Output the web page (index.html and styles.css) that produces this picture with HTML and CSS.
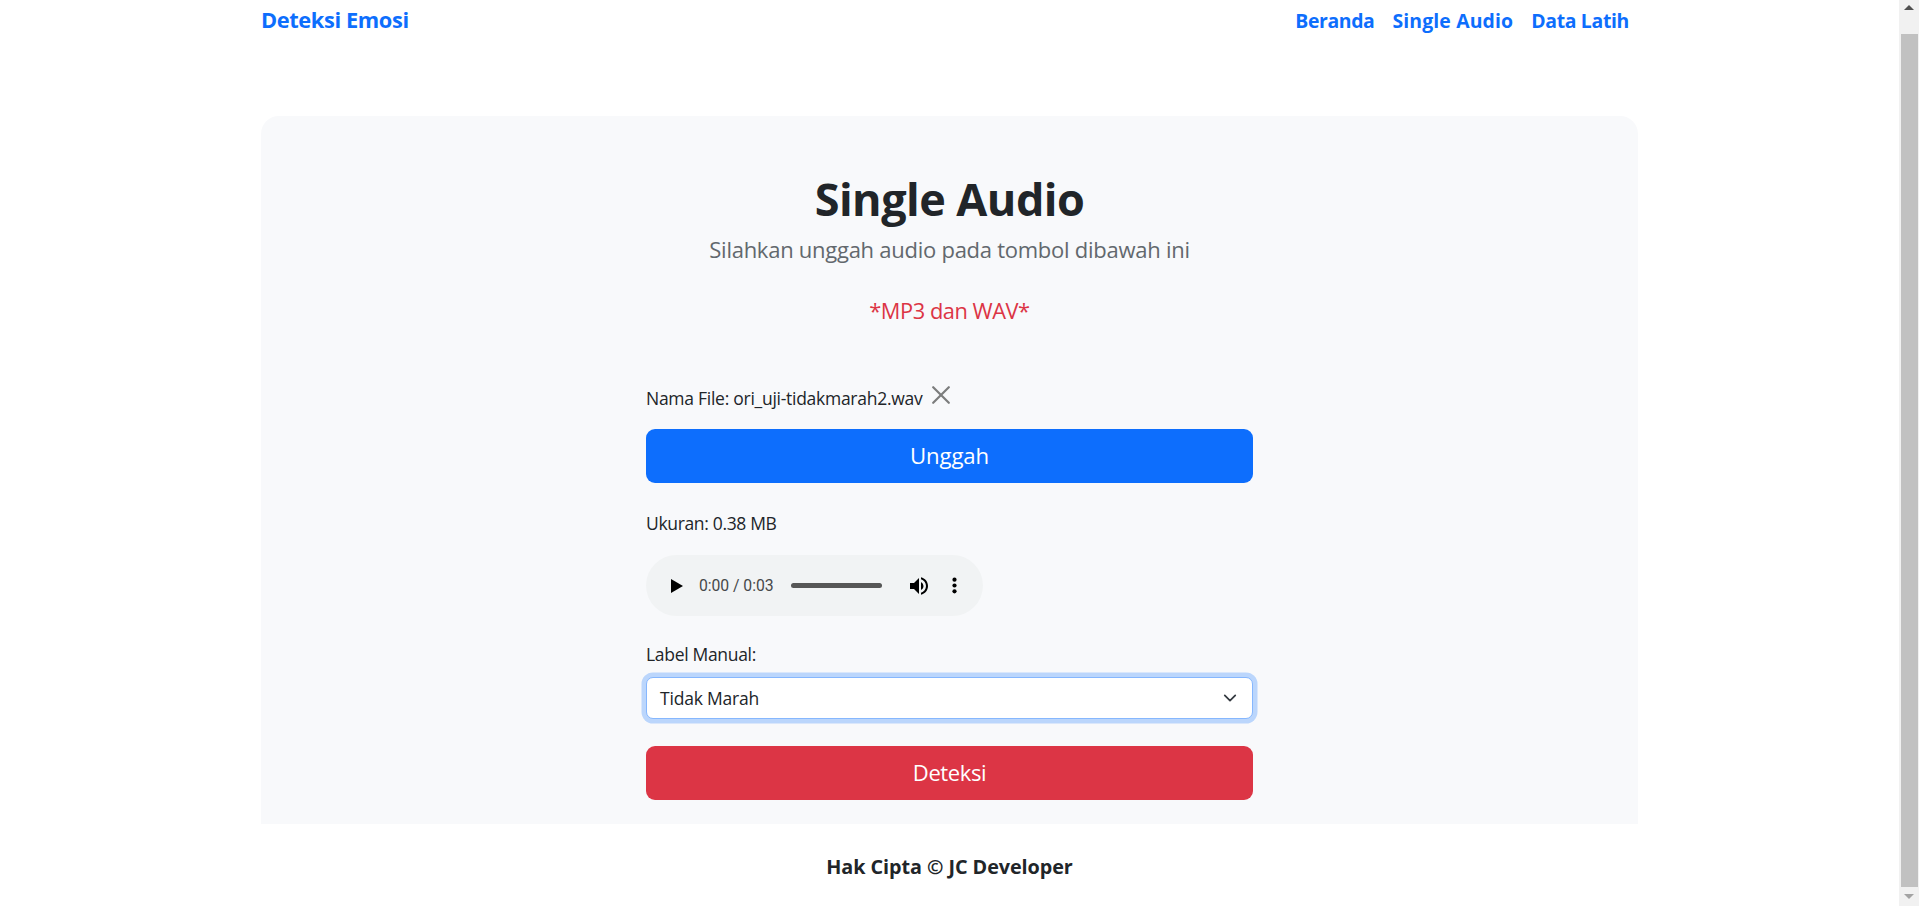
FILE: index.html
```html
<!DOCTYPE html>
<html lang="id">
<head>
<meta charset="utf-8">
<title>Deteksi Emosi</title>
<link rel="stylesheet" href="styles.css">
</head>
<body>
<div class="page">
  <header class="topbar">
    <a class="brand">Deteksi Emosi</a>
    <nav class="nav">
      <a class="nav-home">Beranda</a>
      <a class="nav-single">Single Audio</a>
      <a class="nav-data">Data Latih</a>
    </nav>
  </header>
  <main class="panel">
    <h1 class="title">Single Audio</h1>
    <p class="lead">Silahkan unggah audio pada tombol dibawah ini</p>
    <p class="formats">*MP3 dan WAV*</p>
    <form class="form">
      <div class="file-row">
        <span class="file-name">Nama File: ori_uji-tidakmarah2.wav</span>
        <svg class="close" viewBox="0 0 18 18"><path d="M1.2 1.2l15.6 15.6M16.8 1.2L1.2 16.8"/></svg>
      </div>
      <button type="button" class="btn btn-upload">Unggah</button>
      <p class="size">Ukuran: 0.38 MB</p>
      <div class="player">
        <svg class="play" viewBox="0 0 12 14"><path d="M0 0v14l12-7z"/></svg>
        <span class="time">0:00 / 0:03</span>
        <span class="track"></span>
        <svg class="volume" viewBox="3 3 18 18"><path d="M3 9v6h4l5 5V4L7 9H3zm13.5 3A4.5 4.5 0 0 0 14 7.97v8.05c1.48-.73 2.5-2.25 2.5-4.02zM14 3.23v2.06c2.89.86 5 3.54 5 6.71s-2.11 5.85-5 6.71v2.06c4.01-.91 7-4.49 7-8.77s-2.99-7.86-7-8.77z"/></svg>
        <svg class="dots" viewBox="0 0 5 17"><circle cx="2.5" cy="2.7" r="2.1"/><circle cx="2.5" cy="8.5" r="2.1"/><circle cx="2.5" cy="14.3" r="2.1"/></svg>
      </div>
      <p class="label">Label Manual:</p>
      <div class="select">
        <span>Tidak Marah</span>
        <svg class="chevron" viewBox="0 0 16 16"><path d="m2 5 6 6 6-6"/></svg>
      </div>
      <button type="button" class="btn btn-detect">Deteksi</button>
    </form>
  </main>
  <footer class="footer">Hak Cipta © JC Developer</footer>
</div>
<div class="scrollbar">
  <svg class="arrow arrow-up" viewBox="0 0 10 5"><path d="M0 5l5-5 5 5z"/></svg>
  <div class="thumb"></div>
  <svg class="arrow arrow-down" viewBox="0 0 10 5"><path d="M0 0l5 5 5-5z"/></svg>
</div>
</body>
</html>
```

FILE: styles.css
```css
* { box-sizing: border-box; }
body {
  margin: 0;
  height: 906px;
  overflow: hidden;
  display: flex;
  background: #fff;
  color: #212529;
  font-family: "Open Sans", "Noto Sans", sans-serif;
}
h1, p { margin: 0; }
.page { flex: 1; display: flex; flex-direction: column; align-items: center; }

.topbar {
  width: 1377px;
  height: 41px;
  display: flex;
  justify-content: space-between;
  align-items: flex-start;
  color: #0d6efd;
  font-weight: 700;
}
.brand { font-size: 21.8px; line-height: 39px; letter-spacing: -.38px; }
.nav { display: flex; gap: 18px; padding-right: 9px; font-size: 19.4px; line-height: 41px; }
.nav-home { letter-spacing: -.38px; }
.nav-single { letter-spacing: .15px; }
.nav-data { letter-spacing: -.32px; }

.panel {
  width: 1377px;
  height: 707.5px;
  margin-top: 75px;
  padding-top: 56px;
  border-radius: 18px 18px 0 0;
  background: #f8f9fb;
  display: flex;
  flex-direction: column;
  align-items: center;
}
.title { font-size: 45px; line-height: 54px; font-weight: 700; letter-spacing: -.55px; }
.lead { margin-top: 6px; font-size: 22px; line-height: 34px; letter-spacing: -.26px; color: #62686d; }
.formats { margin-top: 28px; font-size: 21.8px; line-height: 34px; letter-spacing: -.45px; color: #dc3545; }

.form { width: 607px; margin-top: 56px; display: flex; flex-direction: column; }
.file-row { height: 45px; display: flex; align-items: flex-start; gap: 10px; font-size: 17.5px; line-height: 28px; letter-spacing: -.27px; }
.close { width: 18px; height: 18px; margin-top: 2px; fill: none; stroke: #7c7d7d; stroke-width: 2.2; stroke-linecap: round; }
.btn {
  height: 54px;
  padding: 0;
  border: 0;
  border-radius: 9px;
  color: #fff;
  font-family: inherit;
}
.btn-upload { background: #0d6efd; font-size: 22.2px; line-height: 52px; letter-spacing: -.15px; }
.btn-detect { margin-top: 27px; padding-bottom: 2px; background: #dc3545; font-size: 22px; line-height: 50px; letter-spacing: -.4px; }
.size { margin-top: 27px; font-size: 17.5px; line-height: 27px; letter-spacing: -.34px; }

.player {
  width: 337px;
  height: 61px;
  margin-top: 18px;
  padding-left: 25px;
  border-radius: 31px;
  background: #f1f3f4;
  display: flex;
  align-items: center;
}
.play { width: 12px; height: 14px; }
.time { width: 76px; margin-left: 16px; font: 15.75px/20px Roboto, sans-serif; letter-spacing: -.05px; color: #46484a; white-space: nowrap; }
.track { width: 91px; height: 5px; margin-left: 16px; border-radius: 3px; background: #565656; }
.volume { width: 18px; height: 18px; margin-left: 28px; }
.dots { width: 5px; height: 17px; margin-left: 24px; }

.label { margin-top: 25px; font-size: 17.5px; line-height: 27px; letter-spacing: -.31px; }
.select {
  height: 42px;
  margin-top: 9px;
  padding: 0 15px 0 13px;
  border: 1px solid #86b7fe;
  border-radius: 7px;
  background: #fff;
  box-shadow: 0 0 0 4.5px #bbd6fc;
  display: flex;
  align-items: center;
  justify-content: space-between;
  font-size: 17.5px;
  letter-spacing: -.2px;
}
.chevron { width: 14px; height: 14px; fill: none; stroke: #343a40; stroke-width: 2; stroke-linecap: round; stroke-linejoin: round; }

.footer { margin-top: 28.5px; font-size: 19.8px; line-height: 30px; font-weight: 700; letter-spacing: -.06px; }

.scrollbar {
  width: 20px;
  background: #f1f1f1;
  display: flex;
  flex-direction: column;
  align-items: center;
}
.arrow { width: 10px; height: 5px; }
.arrow-up { margin-top: 5px; fill: #505050; }
.arrow-down { margin-top: 7px; fill: #a3a3a3; }
.thumb { width: 17px; height: 853px; margin-top: 24px; background: #c1c1c1; }
```
